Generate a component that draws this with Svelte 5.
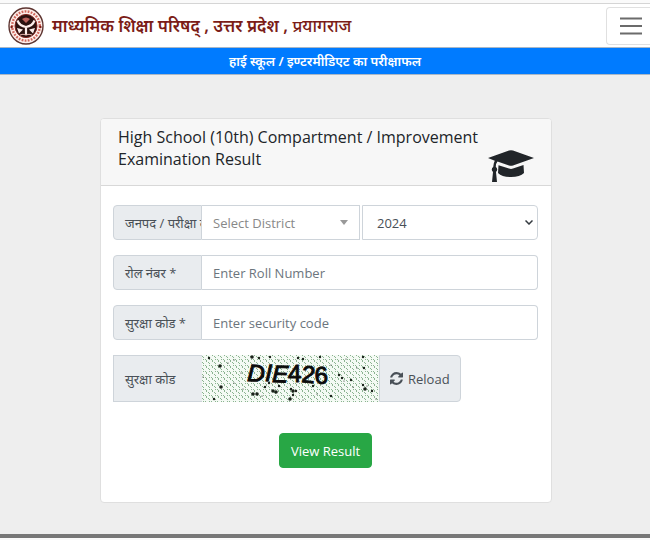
<script>
	const districts = ['Select District', 'Agra', 'Lucknow', 'Prayagraj', 'Varanasi'];
	const years = [2024, 2023, 2022];

	let district = $state(districts[0]);
	let year = $state(2024);
	let rollNumber = $state('');
	let securityCode = $state('');
	let shift = $state(0);

	// x, y, size of the noise specks in the captcha
	const specks = [
		[6, 2, 2], [17, 10, 3], [25, 7, 1], [38, 17, 1], [49, 1, 3], [56, 2, 2], [67, 1, 2],
		[76, 4, 1], [95, 2, 2], [100, 3, 2], [117, 1, 2], [128, 9, 1], [143, 3, 1], [160, 1, 2],
		[161, 12, 2], [154, 12, 1], [148, 24, 2], [136, 19, 2], [139, 22, 2], [141, 25, 1],
		[18, 31, 3], [11, 43, 2], [31, 27, 1], [40, 33, 1], [50, 38, 3], [54, 38, 3], [59, 40, 1],
		[62, 31, 2], [66, 27, 2], [70, 35, 3], [73, 36, 3], [76, 30, 2], [88, 33, 2], [90, 35, 3],
		[93, 35, 2], [90, 39, 2], [87, 43, 3], [100, 44, 1], [110, 30, 2], [114, 38, 1],
		[128, 40, 2], [139, 33, 1], [150, 31, 1], [160, 29, 2], [162, 33, 3], [164, 30, 1],
		[169, 35, 2], [174, 21, 1], [173, 43, 1], [120, 19, 1], [60, 20, 2], [31, 4, 1]
	];
	const letters = [
		{ char: 'D', x: 45, y: 26, turn: 3, italic: true },
		{ char: 'I', x: 63, y: 26, turn: 2, italic: true },
		{ char: 'E', x: 70, y: 27, turn: 2, italic: true },
		{ char: '4', x: 86, y: 27, turn: 0 },
		{ char: '2', x: 99, y: 27, turn: 6 },
		{ char: '6', x: 113, y: 29, turn: -3 }
	];
</script>

<header>
	<a class="brand" href="/">
		<svg class="logo" viewBox="0 0 36 38" aria-hidden="true">
			<ellipse cx="18" cy="19" rx="17" ry="18" fill="#fdeeea" stroke="#5d3430" stroke-width="1.4" />
			<ellipse cx="18" cy="19" rx="13.8" ry="14.6" fill="none" stroke="#d0685c" stroke-width="2.4" stroke-dasharray="1.8 1.3" />
			<ellipse cx="18" cy="19" rx="11" ry="11.6" fill="#2b1210" stroke="#84251f" stroke-width="1" />
			<path d="M9.500 13.500q2 5.500 8.500 6.500 6.500-1 8.500-6.500M18 20v8" fill="none" stroke="#fdeeea" stroke-width="2.2" />
			<path d="M14 12q4-3 8 0l-4 4z" fill="#b9605a" />
			<path d="M9 21l6 1.500-4 4zM27 21l-6 1.500 4 4z" fill="#fdeeea" />
			<path d="M12 28q3-1.500 6 0 3-1.500 6 0" fill="none" stroke="#e9b8b0" stroke-width="1" />
			<circle cx="3.6" cy="20" r="1.2" fill="#7b1c17" />
			<circle cx="32.4" cy="20" r="1.2" fill="#7b1c17" />
		</svg>
		<span>माध्यमिक शिक्षा परिषद् , उत्तर प्रदेश , <span class="city">प्रयागराज</span></span>
	</a>
	<button class="toggler" aria-label="Menu">
		<svg viewBox="0 0 22 18" aria-hidden="true">
			<path d="M0 1.5h22M0 9h22M0 16.5h22" stroke="#6b6b6b" stroke-width="2" />
		</svg>
	</button>
</header>
<div class="title">हाई स्कूल / इण्टरमीडिएट का परीक्षाफल</div>

<main>
	<form class="card" onsubmit={(e) => e.preventDefault()}>
		<div class="card-header">
			<h1>High School (10th) Compartment / Improvement Examination Result</h1>
			<svg class="cap" viewBox="0 0 46 33" aria-hidden="true">
				<path d="M0 8L21 .6q2-.6 4 0L46 8 25 15.4q-2 .6-4 0L9.5 11.6Q8 13 7.800 17a3 3 0 0 1 .2 5L9 32H4l1-10a3 3 0 0 1 .2-5q.2-4 1.600-6.300z" fill="#212529" />
				<path d="M10.500 15.200L21 18.600q2 .6 4 0l10.500-3.600.5 8q-4 4-13 4t-13-4z" fill="#212529" />
			</svg>
		</div>
		<div class="card-body">
			<div class="group">
				<label for="district">जनपद / परीक्षा वर्ष</label>
				<div class="select district">
					<select id="district" bind:value={district}>
						{#each districts as name}
							<option>{name}</option>
						{/each}
					</select>
					<svg viewBox="0 0 8 5" width="8" height="5" aria-hidden="true">
						<path d="M0 0h8L4 5z" fill="#999" />
					</svg>
				</div>
				<div class="select year">
					<select aria-label="Year" bind:value={year}>
						{#each years as y}
							<option value={y}>{y}</option>
						{/each}
					</select>
					<svg viewBox="0 0 8 5" width="8" height="5" aria-hidden="true">
						<path d="M.5.5L4 4 7.500.5" fill="none" stroke="#343a40" stroke-width="1.500" />
					</svg>
				</div>
			</div>
			<div class="group">
				<label for="roll">रोल नंबर *</label>
				<input id="roll" placeholder="Enter Roll Number" bind:value={rollNumber} />
			</div>
			<div class="group">
				<label for="code">सुरक्षा कोड *</label>
				<input id="code" placeholder="Enter security code" bind:value={securityCode} />
			</div>
			<div class="group captcha">
				<span class="caption">सुरक्षा कोड</span>
				<svg class="code" viewBox="0 0 177 47" role="img" aria-label="Security code">
					<defs>
						<pattern id="weave" width="6" height="6" patternUnits="userSpaceOnUse">
							<rect width="6" height="6" fill="#f4faf4" />
							<path d="M0 1l2 2M3 4l2 2M4 0l1 1M1 5l1-1" stroke="#7fab84" stroke-width="0.9" />
						</pattern>
					</defs>
					<rect width="177" height="47" fill="url(#weave)" />
					{#each specks as [x, y, size]}
						<circle cx={((x + shift) % 174) + 1} cy={y + 1} r={size * 0.6} fill="#1a221a" />
					{/each}
					{#each letters as l}
						<text class:italic={l.italic} x={l.x} y={l.y} transform="rotate({l.turn} {l.x} {l.y})">{l.char}</text>
					{/each}
				</svg>
				<button class="reload" type="button" onclick={() => (shift += 31)}>
					<svg viewBox="0 0 1536 1536" width="13" height="13" aria-hidden="true">
						<path
							d="M1511 928q0 5-1 7-64 268-268 434.500T764 1536q-146 0-282.500-55T238 1324l-129 129q-19 19-45 19t-45-19-19-45V960q0-26 19-45t45-19h448q26 0 45 19t19 45-19 45l-137 137q71 66 161 102t187 36q134 0 250-65t186-179q11-17 53-117 8-23 30-23h192q13 0 22.500 9.500t9.500 22.500zm25-800v448q0 26-19 45t-45 19h-448q-26 0-45-19t-19-45 19-45l138-138Q969 256 768 256q-134 0-250 65T332 500q-11 17-53 117-8 23-30 23H50q-13 0-22.500-9.500T18 608v-7q65-268 270-434.500T768 0q146 0 284 55.500T1297 212l130-129q19-19 45-19t45 19 19 45z"
							fill="#495057"
						/>
					</svg>
					Reload
				</button>
			</div>
			<button class="submit">View Result</button>
		</div>
	</form>
</main>

<style>
	:global(body) {
		margin: 0;
		background: #fafafa;
		font-family: 'Open Sans', 'Noto Sans', sans-serif;
		font-size: 13px;
		line-height: 20px;
		color: #212529;
	}
	header {
		display: flex;
		align-items: center;
		justify-content: space-between;
		height: 43px;
		margin-top: 3px;
		border-top: 1px solid #d5d5d5;
		background: #fff;
	}
	.brand {
		display: flex;
		align-items: center;
		gap: 8px;
		padding-left: 8px;
		font-family: 'Noto Sans', sans-serif;
		font-size: 17px;
		font-weight: 600;
		color: #7b1c17;
		text-decoration: none;
		white-space: nowrap;
	}
	.city {
		font-weight: 500;
	}
	.logo {
		width: 36px;
		height: 38px;
	}
	.toggler {
		display: flex;
		padding: 9px 8px 9px 13px;
		border: 1px solid #e0e0e0;
		border-right: 0;
		border-radius: 4px 0 0 4px;
		background: #fff;

		& svg {
			width: 22px;
			height: 18px;
		}
	}
	.title {
		height: 26px;
		border-top: 1px solid #a9b7c6;
		border-bottom: 1px solid #a9b7c6;
		background: #007bff;
		color: #fff;
		font-family: 'Noto Sans', sans-serif;
		font-weight: 600;
		line-height: 26px;
		text-align: center;
	}
	main {
		padding: 43px 98px 31px 100px;
		border-bottom: 4px solid #777;
		background: #eee;
	}
	.card {
		border: 1px solid #dfdfdf;
		border-radius: 4px;
		background: #fff;
		overflow: hidden;
	}
	.card-header {
		display: flex;
		align-items: flex-end;
		justify-content: space-between;
		padding: 7px 17px 2px;
		border-bottom: 1px solid #d8d8d8;
		background: #f7f7f7;
	}
	h1 {
		flex: 1;
		margin: 0 0 13px;
		font-size: 16px;
		font-weight: 400;
		line-height: 22px;
	}
	.cap {
		width: 46px;
		height: 33px;
	}
	.card-body {
		display: flex;
		flex-direction: column;
		gap: 15px;
		padding: 19px 13px 34px 12px;
	}
	.group {
		display: flex;
		height: 35px;
	}
	label,
	.caption {
		display: flex;
		align-items: center;
		box-sizing: border-box;
		width: 89px;
		flex: none;
		padding-left: 11px;
		border: 1px solid #ced4da;
		border-radius: 4px 0 0 4px;
		background: #e9ecef;
		color: #495057;
		white-space: nowrap;
		overflow: hidden;
	}
	.caption {
		border-radius: 0;
		border-right: 0;
	}
	input,
	select {
		box-sizing: border-box;
		width: 100%;
		min-width: 0;
		padding: 0 11px;
		border: 1px solid #ced4da;
		border-left: 0;
		border-radius: 0 4px 4px 0;
		background: #fff;
		color: #495057;
		font: inherit;
	}
	input::placeholder {
		color: #6c757d;
	}
	.select {
		display: grid;
		align-items: center;

		& > * {
			grid-area: 1 / 1;
		}
		& select {
			height: 100%;
			appearance: none;
		}
		& svg {
			justify-self: end;
			pointer-events: none;
		}
	}
	.district {
		flex: 158;
		margin-right: 2px;

		& select {
			border-radius: 0;
			color: #888;
		}
		& svg {
			margin-right: 12px;
		}
	}
	.year {
		flex: 176;

		& select {
			padding-left: 14px;
			border-left: 1px solid #ced4da;
		}
		& svg {
			margin-right: 5px;
		}
	}
	.captcha {
		height: 47px;
	}
	.code {
		width: 177px;
		height: 47px;

		& text {
			fill: #0b0b0b;
			stroke: #0b0b0b;
			font-family: 'Liberation Sans', sans-serif;
			font-size: 24px;
		}
		& .italic {
			font-style: italic;
		}
	}
	.reload {
		display: flex;
		align-items: center;
		gap: 5px;
		padding: 0 10px;
		border: 1px solid #ced4da;
		border-radius: 0 4px 4px 0;
		background: #e9ecef;
		color: #495057;
		font: inherit;
	}
	.submit {
		align-self: center;
		height: 35px;
		margin-top: 16px;
		padding: 0 11px;
		border: 1px solid #28a745;
		border-radius: 4px;
		background: #28a745;
		color: #fff;
		font: inherit;
	}
</style>
